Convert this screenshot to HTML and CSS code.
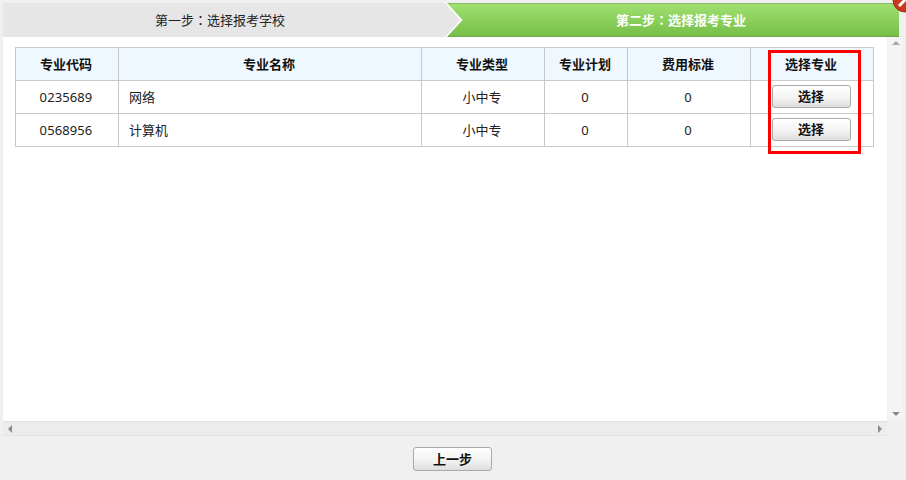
FILE: index.html
```html
<!DOCTYPE html>
<html lang="zh-CN">
<head>
<meta charset="utf-8">
<title>选择报考专业</title>
<link rel="stylesheet" href="styles.css">
</head>
<body>
<div class="dialog">
  <div class="steps">
    <div class="step step-done">第一步<span class="colon">：</span>选择报考学校</div>
    <div class="step step-active">第二步<span class="colon">：</span>选择报考专业</div>
    <svg class="step-arrow" width="18" height="36" viewBox="0 0 18 36"><path d="M0 0 L16.500 18 L0 36 Z" fill="#e6e6e6"/><path d="M0 0 L16.500 18 L0 36" fill="none" stroke="#fff" stroke-width="1.500"/></svg>
  </div>
  <div class="viewport">
    <div class="main">
      <div class="pane">
        <table class="majors">
          <thead>
            <tr><th class="c-code">专业代码</th><th class="c-name">专业名称</th><th class="c-type">专业类型</th><th class="c-plan">专业计划</th><th class="c-fee">费用标准</th><th class="c-pick">选择专业</th></tr>
          </thead>
          <tbody>
            <tr><td class="num">0235689</td><td class="left">网络</td><td>小中专</td><td class="num">0</td><td class="num">0</td><td><button class="btn btn-small" type="button">选择</button></td></tr>
            <tr><td class="num">0568956</td><td class="left">计算机</td><td>小中专</td><td class="num">0</td><td class="num">0</td><td><button class="btn btn-small" type="button">选择</button></td></tr>
          </tbody>
        </table>
        <div class="highlight"></div>
      </div>
      <div class="hbar">
        <span class="arr arr-left"></span>
        <span class="arr arr-right"></span>
      </div>
    </div>
    <div class="vbar">
      <span class="arr arr-up"></span>
      <span class="arr arr-down"></span>
    </div>
  </div>
  <div class="footer"><button class="btn btn-back" type="button">上一步</button></div>
</div>
<div class="close"><svg width="26" height="26" viewBox="0 0 26 26"><circle cx="13" cy="13" r="12" fill="#c8391f" stroke="#a12c18"/><path d="M7 19 L19 7" stroke="#fff" stroke-width="3"/></svg></div>
</body>
</html>
```
FILE: styles.css
```css
* { box-sizing: border-box; }
html, body { margin: 0; height: 100%; }
body {
  background: #f0f0f0;
  overflow: hidden;
  position: relative;
  font-family: "Noto Sans", "Noto Sans CJK SC", sans-serif;
  font-size: 13px;
  color: #222;
}
.dialog { height: 480px; padding: 3px 0 0 3px; display: flex; flex-direction: column; }
.steps { display: flex; height: 34px; width: 896px; position: relative; }
.step { display: flex; align-items: center; justify-content: center; font-size: 13px; padding-bottom: 2px; }
.colon { font-family: "Noto Sans CJK TC", sans-serif; }
.step-done { width: 443px; background: #e6e6e6; color: #222; padding-right: 9px; }
.step-active {
  flex: 1;
  padding-left: 17px;
  color: #fff;
  font-weight: 700;
  background: linear-gradient(#a0e070, #76bf48);
  border-top: 1px solid #86b96a;
  border-bottom: 1px solid #6ea84a;
}
.step-arrow { position: absolute; left: 442px; top: -1px; }
.viewport { display: flex; height: 399px; }
.main { width: 884px; display: flex; flex-direction: column; }
.pane { height: 384px; background: #fff; padding: 10px 12px; position: relative; }
.majors { border-collapse: collapse; table-layout: fixed; width: 858px; color: #222; }
.majors th, .majors td { border: 1px solid #c9c9c9; height: 33px; padding: 0 2px 2px 0; text-align: center; font-size: 13px; }
.majors th { background: #eef8fe; font-weight: 700; color: #111; }
.majors td.num { padding-bottom: 0; letter-spacing: 0.1px; }
.majors td.left { text-align: left; padding-left: 10px; }
.c-code { width: 103px; }
.c-name { width: 303px; }
.c-type { width: 123px; }
.c-plan { width: 83px; }
.c-fee { width: 123px; }
.c-pick { width: 123px; }
.btn {
  font-family: inherit;
  font-weight: 700;
  font-size: 13px;
  color: #111;
  padding: 0 0 1px;
  border: 1px solid #a9a9a9;
  border-radius: 3px;
  background: linear-gradient(#ffffff, #f3f3f3 55%, #dedede);
  display: inline-flex;
  align-items: center;
  justify-content: center;
}
.btn-small { width: 79px; height: 23px; vertical-align: middle; }
.btn-back { width: 79px; height: 24px; }
.highlight {
  position: absolute;
  left: 765px;
  top: 13px;
  width: 93px;
  height: 104px;
  border: 3px solid #f00;
}
.hbar {
  height: 15px;
  background: #ececec;
  border-top: 1px solid #e2e2e2;
  border-bottom: 1px solid #e4e4e4;
  display: flex;
  align-items: center;
  justify-content: space-between;
  padding: 0 5px;
}
.vbar {
  width: 15px;
  margin-left: 1px;
  height: 382px;
  background: #f4f4f4;
  display: flex;
  flex-direction: column;
  align-items: center;
  justify-content: space-between;
  padding: 4px 0 3px;
}
.arr { display: block; width: 0; height: 0; border: 4px solid transparent; }
.arr-left { border-right-color: #8a8a8a; border-left-width: 0; }
.arr-right { border-left-color: #8a8a8a; border-right-width: 0; }
.arr-up { border-bottom-color: #a8a8a8; border-top-width: 0; }
.arr-down { border-top-color: #8a8a8a; border-bottom-width: 0; }
.footer { flex: 1; display: flex; justify-content: center; padding: 11px 4px 0 0; }
.close { position: absolute; left: 892px; top: -13px; width: 26px; height: 26px; }
.close svg { display: block; }
```
